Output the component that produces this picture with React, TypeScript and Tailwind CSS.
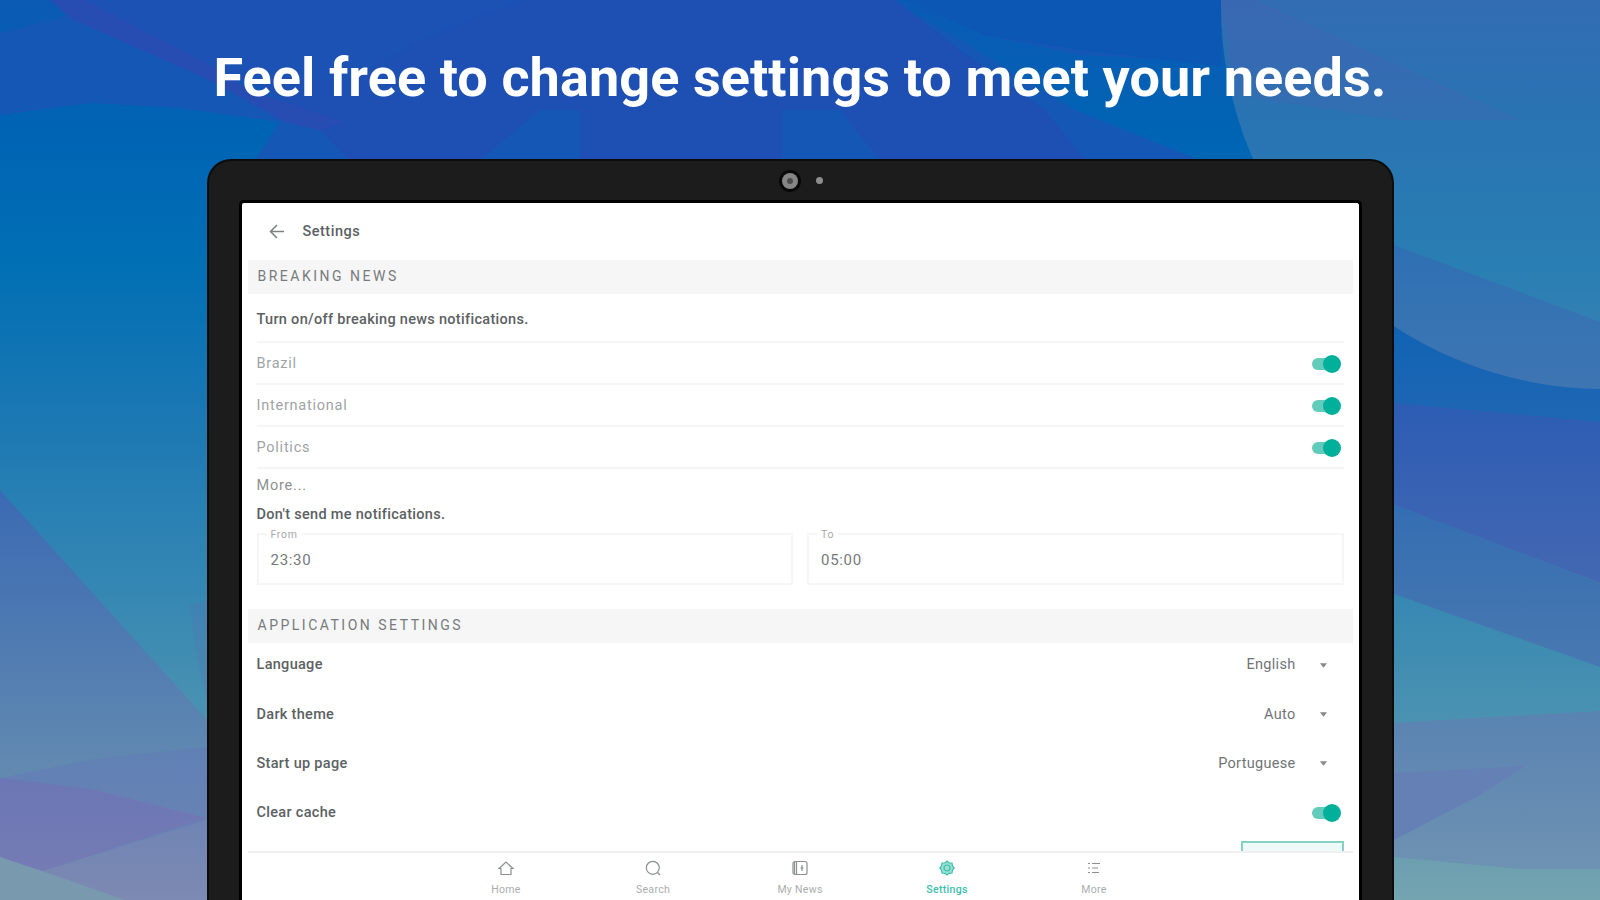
import React from "react";

function Fade({ id, from, to }: { id: string; from: string; to: string }) {
  return (
    <linearGradient id={id} x1="0" y1="0" x2="0" y2="1">
      <stop offset="0" stopColor={from} />
      <stop offset="1" stopColor={to} />
    </linearGradient>
  );
}

function Backdrop() {
  return (
    <svg className="absolute inset-0 h-full w-full" viewBox="0 0 1600 900" preserveAspectRatio="none">
      <defs>
        <linearGradient id="sky" x1="0" y1="0" x2="0" y2="1">
          <stop offset="0" stopColor="#0b5ab4" />
          <stop offset="0.15" stopColor="#0064b4" />
          <stop offset="0.29" stopColor="#006fb4" />
          <stop offset="0.47" stopColor="#1c78b3" />
          <stop offset="0.65" stopColor="#3487b3" />
          <stop offset="0.8" stopColor="#4b92b1" />
          <stop offset="0.93" stopColor="#679cb0" />
          <stop offset="1" stopColor="#74a4b0" />
        </linearGradient>
        <Fade id="slope" from="#3a6ab3" to="#6a90b0" />
        <Fade id="band" from="#6080b4" to="#6c84b4" />
        <Fade id="violet" from="#6b76b4" to="#757cb4" />
        <Fade id="dusk" from="#7084b4" to="#7d8ab2" />
        <Fade id="r1" from="#065fb4" to="#1f67b4" />
        <Fade id="r2" from="#2c5cb4" to="#4468b2" />
        <Fade id="r3" from="#346eb2" to="#4878b0" />
        <Fade id="r4" from="#5983b2" to="#6e92b2" />
      </defs>
      <rect width="1600" height="900" fill="url(#sky)" />
      <path d="M0 33L70 15L50 0H400L1221 0V62L1080 55L985 35L905 0H890L960 40L1075 110L1200 160H255L280 122L180 108L90 103L0 115Z" fill="#1457b4" />
      <path d="M905 0H1221V66L1080 50L985 35Z" fill="#0c56b4" />
      <path d="M430 35L520 0H895L960 50L1045 110L1085 160H880L840 110H782V160H580V110H540L480 160H350L300 110L240 75Z" fill="#1e50b4" />
      <path d="M50 0H520L430 35L350 80L240 80Z" fill="#1b52b4" />
      <path d="M50 0L85 0L215 68L250 90L345 122L320 130L285 122L205 78L70 18Z" fill="#274db3" />
      <path d="M1221 0H1255L1520 120L1400 120L1236 95Z" fill="#4a34b4" fillOpacity=".13" />
      <path d="M1394 245L1600 322V425L1394 410Z" fill="url(#r1)" />
      <path d="M1394 403L1600 422V583L1394 505Z" fill="url(#r2)" />
      <path d="M1394 505L1600 583V667L1394 594Z" fill="url(#r3)" />
      <path d="M1394 723L1600 711V869H1520L1394 857Z" fill="url(#r4)" />
      <path d="M1394 773L1525 766L1480 795L1394 840Z" fill="#6580b4" />
      <path d="M0 490L207 720V830H0Z" fill="url(#slope)" />
      <path d="M207 600L190 605L196 655L207 700Z" fill="#7060b8" fillOpacity=".15" />
      <path d="M0 778L100 758L207 747V825L40 872L0 857Z" fill="url(#band)" />
      <path d="M40 872L207 820V900H120Z" fill="url(#dusk)" />
      <path d="M0 778L90 789L207 818L40 872L0 857Z" fill="url(#violet)" />
      <path d="M0 857L45 872L125 900H0Z" fill="#7899ae" />
      <circle cx="1604" cy="6" r="383" fill="#ffd0b0" fillOpacity=".16" />
    </svg>
  );
}

function Toggle() {
  return (
    <span className="relative flex h-5 w-[29px] items-center">
      <span className="h-3 w-6 rounded-full bg-[#63cbbb]" />
      <span className="absolute right-0 size-[18px] rounded-full bg-[#00b09b]" />
    </span>
  );
}

function SectionTitle({ children }: { children: string }) {
  return (
    <h2 className="mx-1.5 flex h-[34px] shrink-0 items-center bg-[#f6f6f6] px-[10px] pb-px text-[14px] tracking-[2.5px] text-[#777b7d]">
      {children}
    </h2>
  );
}

function TimeField({ label, value }: { label: string; value: string }) {
  return (
    <div className="relative flex h-[52px] flex-1 items-center border-2 border-[#f6f6f6] px-3 pt-0.5 text-[15px] tracking-[0.7px] text-[#75797b]">
      <span className="absolute -top-[7px] left-2 bg-white px-1 text-[10.5px] leading-[14px] text-[#a6a9ab]">{label}</span>
      {value}
    </div>
  );
}

function SelectRow({ label, value, height }: { label: string; value: string; height: string }) {
  return (
    <div className={`flex shrink-0 items-center justify-between pr-[17px] ${height}`}>
      <span className="font-medium">{label}</span>
      <span className="flex items-center gap-[24px] text-[#707476]">
        {value}
        <svg className="h-[5px] w-[7px]" viewBox="0 0 8 5"><path d="M0 0H8L4 5Z" fill="#858789" /></svg>
      </span>
    </div>
  );
}

const navItems: { label: string; active?: boolean; icon: React.ReactNode }[] = [
  { label: "Home", icon: <path d="M1 8.5L8 2L15 8.5H13V14.5H3V8.5Z" /> },
  { label: "Search", icon: <><circle cx="7.8" cy="7.8" r="6.5" /><path d="M12.5 12.5L15 15" /></> },
  { label: "My News", icon: <><rect x="1" y="1.5" width="14" height="13" rx="2" /><path d="M2.5 2V14M4.5 2V14" /><path d="M10 5V11M8.5 8H11.5" /></> },
  { label: "Settings", active: true, icon: <><path d="M8 1L10 3L13 3L13.5 6L15.3 8L13.5 10L13 13L10 13.3L8 15L6 13.3L3 13L2.5 10L.7 8L2.5 6L3 3L6 3Z" fill="#9ddfd5" /><circle cx="8" cy="8" r="3" /></> },
  { label: "More", icon: <path d="M2 3.5H4M6 3.5H14M2 8H4M6 8H12M2 12.5H4M6 12.5H13" /> },
];

const topics = ["Brazil", "International", "Politics"];

export default function App() {
  return (
    <main className="relative h-[900px] w-[1600px] overflow-hidden font-['Roboto',sans-serif]">
      <Backdrop />
      <div className="relative flex h-full flex-col items-center">
        <h1 className="flex h-[159px] shrink-0 items-center whitespace-nowrap pb-1 text-[54px] font-bold tracking-[0.08px] text-white">
          Feel free to change settings to meet your needs.
        </h1>
        <div className="flex w-[1187px] flex-1 flex-col rounded-t-[24px] border-x-2 border-t-2 border-[#0d0c0b] bg-[#1c1c1d] px-[30px]">
          <div className="flex h-[39px] shrink-0 items-center justify-center gap-[15px]">
            <span className="ml-[2px] flex size-[22px] items-center justify-center rounded-full bg-[#080808]">
              <span className="flex size-4 items-center justify-center rounded-full bg-[#858585]">
                <span className="size-1.5 rounded-full bg-[#4b4b4b]" />
              </span>
            </span>
            <span className="size-[7px] rounded-full bg-[#8d8d8d]" />
          </div>
          <div className="flex flex-1 flex-col rounded-t-[5px] border-x-[3px] border-t-[3px] border-black bg-white text-[14.5px] tracking-[0.3px] text-[#5c6163]">
            <header className="flex h-[57px] shrink-0 items-center pl-[27px]">
              <svg className="size-4" viewBox="0 0 16 16" fill="none" stroke="#7c8082" strokeWidth="1.5"><path d="M15 7.5H1.5M8 1L1.5 7.5L8 14" /></svg>
              <span className="ml-[18px] pt-px font-medium tracking-[0.5px]">Settings</span>
            </header>
            <SectionTitle>BREAKING NEWS</SectionTitle>
            <section className="flex shrink-0 flex-col px-[15px]">
              <p className="flex h-[47px] items-center pt-1 font-medium">Turn on/off breaking news notifications.</p>
              {topics.map((topic) => (
                <div key={topic} className="flex h-[42px] items-center justify-between border-t-2 border-[#f6f6f6] pt-0.5 pr-[3px] tracking-[0.75px] text-[#a0a3a5]">
                  {topic}
                  <Toggle />
                </div>
              ))}
              <p className="flex h-[34px] items-center border-t-2 border-[#f6f6f6] pt-0.5 tracking-[0.8px] text-[#8c9092]">More...</p>
              <p className="flex h-[28px] items-center font-medium">Don't send me notifications.</p>
              <div className="mt-[4px] mb-[24px] flex gap-[14px]">
                <TimeField label="From" value="23:30" />
                <TimeField label="To" value="05:00" />
              </div>
            </section>
            <SectionTitle>APPLICATION SETTINGS</SectionTitle>
            <section className="flex h-[208px] shrink-0 flex-col overflow-hidden px-[15px]">
              <SelectRow label="Language" value="English" height="h-[44px]" />
              <SelectRow label="Dark theme" value="Auto" height="h-[55px]" />
              <SelectRow label="Start up page" value="Portuguese" height="h-[43px]" />
              <div className="flex h-[56px] shrink-0 items-center justify-between pr-[3px]">
                <span className="font-medium">Clear cache</span>
                <Toggle />
              </div>
              <div className="h-[30px] w-[103px] shrink-0 self-end border-2 border-[#85d1c4] bg-[#eefaf8]" />
            </section>
            <nav className="mx-1.5 flex flex-1 justify-center border-t-2 border-[#efefef] pt-[7px]">
              {navItems.map((item) => (
                <div key={item.label} className={`flex w-[147px] flex-col items-center gap-[7px] text-[10.5px] leading-[13px] ${item.active ? "font-medium text-[#3bbfad]" : "text-[#aaadae]"}`}>
                  <svg className="size-4" viewBox="0 0 16 16" fill="none" stroke={item.active ? "#3bbfad" : "#8b8f90"} strokeWidth="1.2">{item.icon}</svg>
                  {item.label}
                </div>
              ))}
            </nav>
          </div>
        </div>
      </div>
    </main>
  );
}
